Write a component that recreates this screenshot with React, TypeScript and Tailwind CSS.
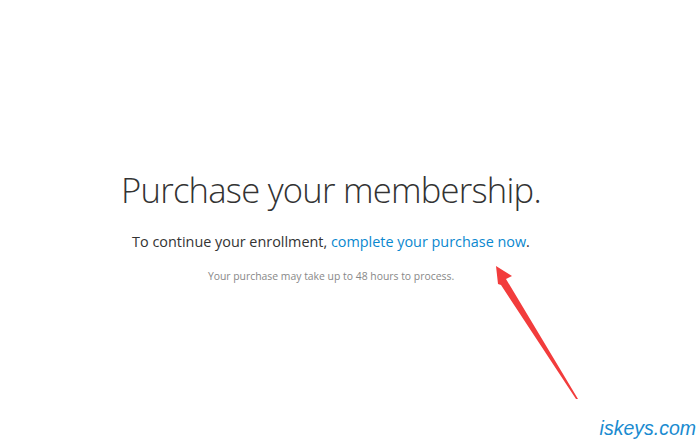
export default function App() {
  return (
    <div className="relative h-[440px] w-[699px] overflow-hidden bg-white font-['Open_Sans',sans-serif]">
      <div className="flex w-[662px] flex-col items-center pt-[165px] text-center">
        <h1 className="text-[34.6px] font-light leading-[50px] tracking-[-0.75px] text-[#333]">
          Purchase your membership.
        </h1>
        <p className="mt-[17px] text-[14.4px] leading-[20px] text-[#333]">
          To continue your enrollment,{" "}
          <a className="text-[#0a88cf]">complete your purchase now</a>.
        </p>
        <p className="mt-[17px] text-[10.4px] leading-[14px] text-[#888]">
          Your purchase may take up to 48 hours to process.
        </p>
      </div>

      {/* red arrow pointing at the link */}
      <svg className="absolute left-0 top-0" width="699" height="440" aria-hidden>
        <polygon
          points="496,266 512,276 506,279 578,399 576,399 501,285 498,284"
          fill="#f23c3c"
        />
      </svg>

      <span className="absolute right-[3px] top-[414px] font-['Liberation_Sans',sans-serif] text-[19.5px] italic text-[#1a8bd0]">
        iskeys.com
      </span>
    </div>
  );
}
